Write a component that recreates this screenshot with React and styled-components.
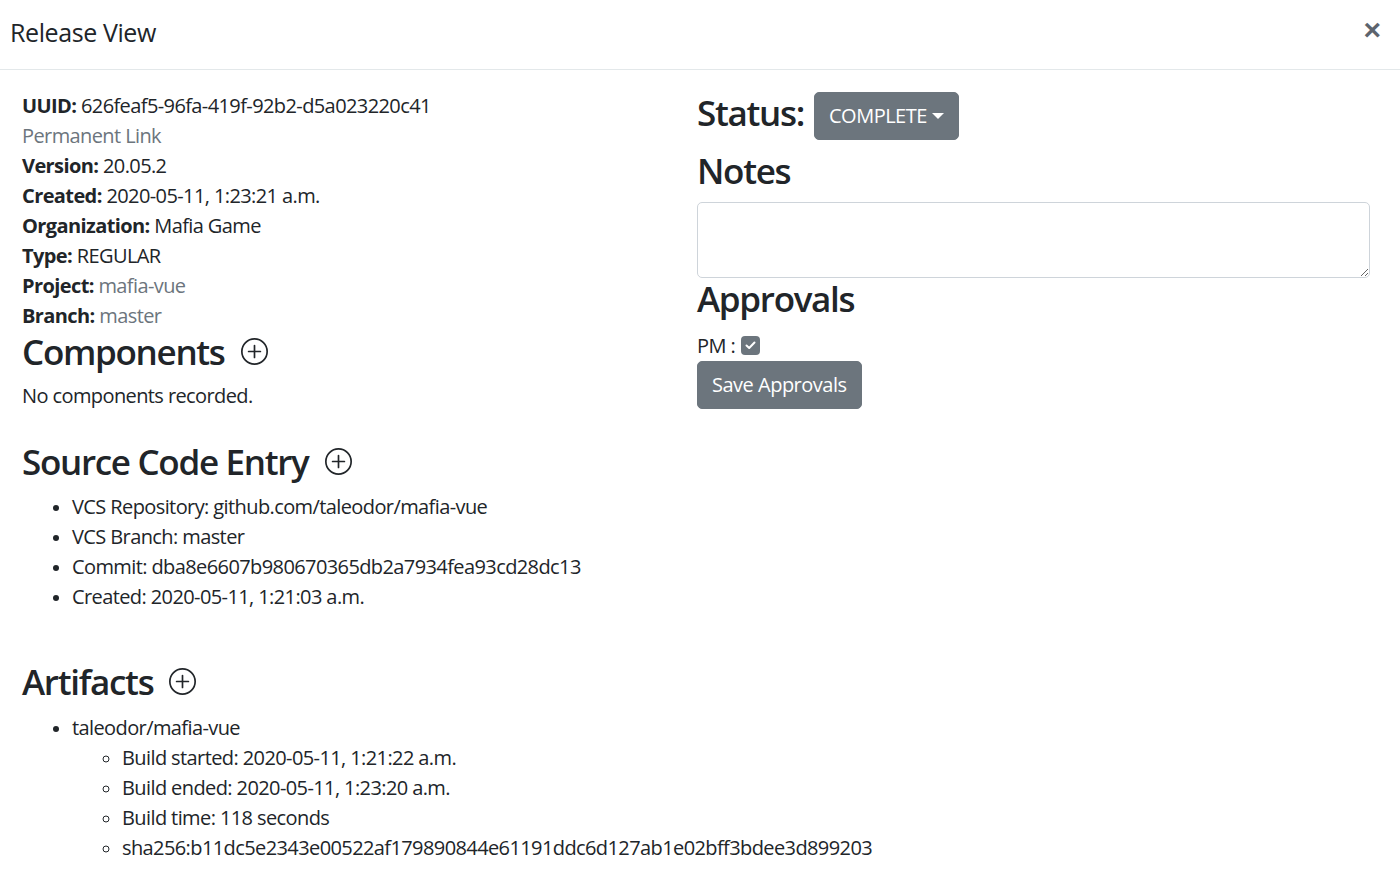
import React from 'react';
import styled, { createGlobalStyle } from 'styled-components';
import { BsPlusCircle } from 'react-icons/bs';

const GlobalStyle = createGlobalStyle`
  body {
    margin: 0;
    background: #fff;
    color: #212529;
    font-family: "Open Sans", "Noto Sans", sans-serif;
    font-size: 20px;
    line-height: 30px;
    letter-spacing: -0.6px;
  }
`;

const Header = styled.header`
  height: 69px;
  border-bottom: 1px solid #e3e8ea;
  display: flex;
  align-items: center;
  justify-content: space-between;
  padding: 0 19px 0 10px;
`;

const Title = styled.h5`
  margin: 0 0 6px;
  font-size: 25px;
  font-weight: 500;
  line-height: 30px;
  letter-spacing: -0.4px;
`;

const Close = styled.button`
  border: none;
  background: none;
  padding: 0;
  font-family: "Liberation Sans", Arial, sans-serif;
  font-size: 30px;
  font-weight: 700;
  line-height: 1;
  color: #5d646d;
  margin-bottom: 10px;
  cursor: pointer;
`;

const Body = styled.main`
  display: grid;
  grid-template-columns: 650px 673px;
  column-gap: 25px;
  padding: 21px 30px 20px 22px;
  align-items: start;
`;

const Column = styled.section`
  display: flex;
  flex-direction: column;
`;

const Field = styled.div`
  height: 30px;
  white-space: nowrap;
`;

const Label = styled.b`
  font-weight: 700;
`;

const Link = styled.a`
  color: #6c757d;
  text-decoration: none;
`;

const Heading = styled.h2`
  margin: ${p => p.$mt || 0}px 0 ${p => p.$mb || 0}px;
  padding-bottom: 6px;
  font-size: 35px;
  font-weight: 600;
  line-height: 42px;
  letter-spacing: -1.3px;
  display: flex;
  align-items: center;
  gap: 16px;
  white-space: nowrap;
`;

const AddIcon = styled(BsPlusCircle)`
  font-size: 27px;
  margin-bottom: 2px;
  color: #212529;
`;

const Text = styled.p`
  margin: 0;
`;

const List = styled.ul`
  margin: 0;
  padding-left: 50px;
  list-style: ${p => (p.$nested ? 'circle' : 'disc')};
  li::marker {
    font-size: 17px;
  }
`;

const StatusRow = styled.div`
  display: flex;
  align-items: center;
  gap: 10px;
  margin-top: 1px;
  height: 48px;
`;

const GrayButton = styled.button`
  background: #6c757d;
  color: #fff;
  border: 1px solid #6c757d;
  border-radius: 5px;
  font-family: inherit;
  font-size: 20px;
  letter-spacing: -0.5px;
  line-height: 30px;
  height: 48px;
  padding: 0 14px;
  display: inline-flex;
  align-items: center;
  gap: 4px;
  cursor: pointer;
`;

const Caret = styled.span`
  display: inline-block;
  width: 0;
  height: 0;
  border-left: 6px solid transparent;
  border-right: 6px solid transparent;
  border-top: 6px solid #fff;
  margin-left: 1px;
`;

const Notes = styled.textarea`
  height: 76px;
  width: 100%;
  box-sizing: border-box;
  border: 1px solid #ced4da;
  border-radius: 5px;
  font-family: inherit;
  font-size: 20px;
  resize: vertical;
`;

const CheckRow = styled.label`
  display: flex;
  align-items: center;
  gap: 6px;
  height: 30px;
`;

const Check = styled.span`
  width: 19px;
  height: 19px;
  border-radius: 4px;
  background: #6c757d;
  display: inline-flex;
  align-items: center;
  justify-content: center;
  margin-top: -2px;
`;

const source = [
  'VCS Repository: github.com/taleodor/mafia-vue',
  'VCS Branch: master',
  'Commit: dba8e6607b980670365db2a7934fea93cd28dc13',
  'Created: 2020-05-11, 1:21:03 a.m.'
];

const artifactDetails = [
  'Build started: 2020-05-11, 1:21:22 a.m.',
  'Build ended: 2020-05-11, 1:23:20 a.m.',
  'Build time: 118 seconds',
  'sha256:b11dc5e2343e00522af179890844e61191ddc6d127ab1e02bff3bdee3d899203'
];

export default function App() {
  return (
    <>
      <GlobalStyle />
      <Header>
        <Title>Release View</Title>
        <Close aria-label="Close">×</Close>
      </Header>
      <Body>
        <Column>
          <Field><Label>UUID:</Label> 626feaf5-96fa-419f-92b2-d5a023220c41</Field>
          <Field><Link href="#">Permanent Link</Link></Field>
          <Field><Label>Version:</Label> 20.05.2</Field>
          <Field><Label>Created:</Label> 2020-05-11, 1:23:21 a.m.</Field>
          <Field><Label>Organization:</Label> Mafia Game</Field>
          <Field><Label>Type:</Label> REGULAR</Field>
          <Field><Label>Project:</Label> <Link href="#">mafia-vue</Link></Field>
          <Field><Label>Branch:</Label> <Link href="#">master</Link></Field>

          <Heading $mb={2}>Components <AddIcon /></Heading>
          <Text>No components recorded.</Text>

          <Heading $mt={30} $mb={3}>Source Code Entry <AddIcon /></Heading>
          <List>
            {source.map(s => <li key={s}>{s}</li>)}
          </List>

          <Heading $mt={49} $mb={4}>Artifacts <AddIcon /></Heading>
          <List>
            <li>
              taleodor/mafia-vue
              <List $nested>
                {artifactDetails.map(s => <li key={s}>{s}</li>)}
              </List>
            </li>
          </List>
        </Column>

        <Column>
          <StatusRow>
            <Heading>Status:</Heading>
            <GrayButton>COMPLETE<Caret /></GrayButton>
          </StatusRow>
          <Heading $mt={10} $mb={4}>Notes</Heading>
          <Notes />
          <Heading $mb={5}>Approvals</Heading>
          <CheckRow>
            PM :
            <Check>
              <svg width="11" height="9" viewBox="0 0 11 9">
                <path d="M1.5 4.5 L4.2 7 L9.5 1.5" fill="none" stroke="#fff" strokeWidth="2" strokeLinecap="round" strokeLinejoin="round" />
              </svg>
            </Check>
          </CheckRow>
          <div>
            <GrayButton>Save Approvals</GrayButton>
          </div>
        </Column>
      </Body>
    </>
  );
}
